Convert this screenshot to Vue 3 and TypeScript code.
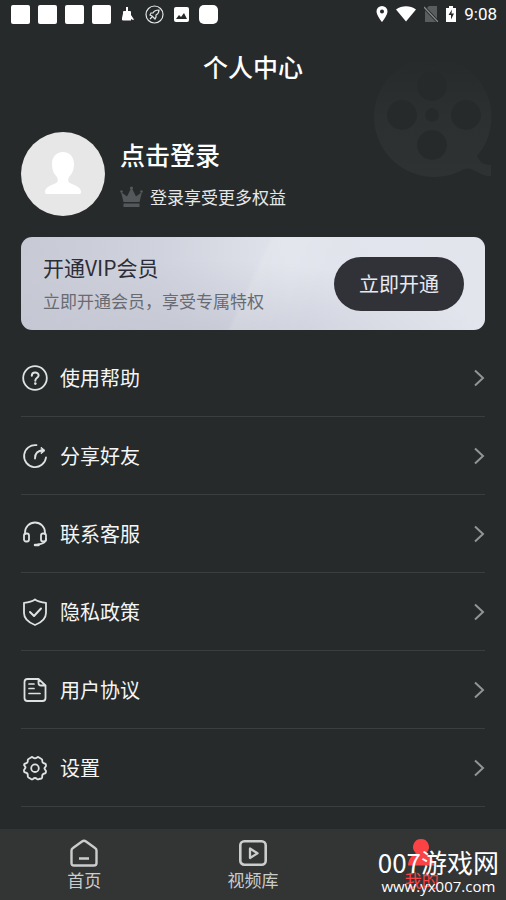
<script setup lang="ts">
import { ref } from 'vue'

type MenuIcon = 'help' | 'share' | 'service' | 'privacy' | 'agreement' | 'settings'

interface MenuItem {
  icon: MenuIcon
  label: string
}

const menu: MenuItem[] = [
  { icon: 'help', label: '使用帮助' },
  { icon: 'share', label: '分享好友' },
  { icon: 'service', label: '联系客服' },
  { icon: 'privacy', label: '隐私政策' },
  { icon: 'agreement', label: '用户协议' },
  { icon: 'settings', label: '设置' },
]

const tabs = [
  { id: 'home', label: '首页' },
  { id: 'library', label: '视频库' },
  { id: 'mine', label: '我的' },
]

const activeTab = ref('mine')
</script>

<template>
  <div class="page">
    <div class="status">
      <div class="status-group notices">
        <i class="block"></i>
        <i class="block"></i>
        <i class="block"></i>
        <i class="block"></i>
        <svg class="broom" width="14" height="14" viewBox="0 0 14 14" aria-hidden="true">
          <path d="M5 0h2v4h2q1 0 1 1v3l3 4.500-1 .5-2-1v1.500H2Q.5 13.500 1 11l1-4.500V5q0-1 1-1h2z" fill="#fff" />
        </svg>
        <svg class="rocket" width="19" height="19" viewBox="0 0 19 19" fill="none" stroke="#e4e6e6" aria-hidden="true">
          <circle cx="9.500" cy="9.500" r="8.500" stroke-width="1.200" />
          <path d="M14 5c-3 0-5 1-6 3H6l-1 2 2 1 2 2 1 1 1-2v-2c2-1 3-3 3-5zM5 14l2-2" stroke-width="1.200" />
        </svg>
        <svg class="photo" width="15" height="15" viewBox="0 0 15 15" aria-hidden="true">
          <rect width="15" height="15" rx="2" fill="#fff" />
          <path d="M2 12l3-4 2 2 3-4 3 6z" fill="#262a2b" />
        </svg>
        <i class="block round"></i>
      </div>
      <div class="status-group system">
        <svg width="12" height="16" viewBox="0 0 12 16" aria-hidden="true">
          <path d="M6 0a5.500 5.500 0 0 0-5.500 5.500C.5 9.500 6 16 6 16s5.500-6.500 5.500-10.500A5.500 5.500 0 0 0 6 0zm0 3.500a2 2 0 1 1 0 4 2 2 0 0 1 0-4z" fill="#fff" />
        </svg>
        <svg width="20" height="16" viewBox="0 0 20 16" aria-hidden="true">
          <path d="M0 3.500C6-.8 14-.8 20 3.500L10 15.500z" fill="#fff" />
        </svg>
        <svg class="sim" width="14" height="16" viewBox="0 0 14 16" aria-hidden="true">
          <path d="M5 0h8v16H1V4z" fill="#5a5d5e" />
          <path d="M0 1l14 15" stroke="#262a2b" stroke-width="3" />
          <path d="M0 1l14 15" stroke="#8b8d8d" stroke-width="1.200" />
        </svg>
        <svg width="10" height="16" viewBox="0 0 10 16" aria-hidden="true">
          <path d="M3 0h4v2h3v14H0V2h3z" fill="#fff" />
          <path d="M6 3.500L2.500 9H5v4.500L8 7.500H5.500z" fill="#262a2b" />
        </svg>
        <time>9:08</time>
      </div>
    </div>

    <header class="title-bar">
      <h1>个人中心</h1>
      <svg class="reel" width="122" height="122" viewBox="0 0 122 122" aria-hidden="true">
        <defs>
          <linearGradient id="reel-fade" x1="0" y1="0" x2="0" y2="1">
            <stop offset="0" stop-color="#2e3132" stop-opacity="0" />
            <stop offset="0.500" stop-color="#2e3132" stop-opacity="0.850" />
            <stop offset="1" stop-color="#2f3233" />
          </linearGradient>
        </defs>
        <path
          fill="url(#reel-fade)"
          fill-rule="evenodd"
          d="M60 0a60 60 0 1 0 32 112c10-3 16 8 27 7V108c-7 0-11-2-14-9A60 60 0 0 0 60 0zM60 14a15 15 0 1 1 0 30 15 15 0 0 1 0-30zM30 43a15 15 0 1 1 0 30 15 15 0 0 1 0-30zM94 43a15 15 0 1 1 0 30 15 15 0 0 1 0-30zM60 73a15 15 0 1 1 0 30 15 15 0 0 1 0-30zM60 51a7 7 0 1 1 0 14 7 7 0 0 1 0-14z"
        />
      </svg>
    </header>

    <main class="content">
      <button type="button" class="profile">
        <svg class="avatar" width="84" height="84" viewBox="0 0 84 84" aria-hidden="true">
          <circle cx="42" cy="42" r="42" fill="#e7e7e7" />
          <path d="M42 20c-7 0-11 5-11 12 0 6 2 10 5 13 2 4 0 6-3 7-5 2-9 4-9 8 0 2 1 2 3 2h30c2 0 3 0 3-2 0-4-4-6-9-8-3-1-5-3-3-7 3-3 5-7 5-13 0-7-4-12-11-12z" fill="#fff" />
        </svg>
        <span class="profile-text">
          <strong>点击登录</strong>
          <span class="benefit">
            <svg width="24" height="22" viewBox="0 0 24 22" fill="#55585a" aria-hidden="true">
              <path d="M3.500 16L1 6l6 4.500L11 2.500h1L16 10.500 22 6l-2.500 10zM3.500 17.500h16V21h-16z" />
              <circle cx="1.500" cy="5.500" r="1.300" />
              <circle cx="11.500" cy="2" r="1.600" />
              <circle cx="21.500" cy="5.500" r="1.300" />
            </svg>
            <span>登录享受更多权益</span>
          </span>
        </span>
      </button>

      <section class="vip">
        <div class="vip-text">
          <h2>开通VIP会员</h2>
          <p>立即开通会员，享受专属特权</p>
        </div>
        <button type="button" class="vip-button">立即开通</button>
      </section>

      <ul class="menu">
        <li v-for="item in menu" :key="item.icon">
          <button type="button" class="menu-row">
            <svg class="menu-icon" width="28" height="28" viewBox="0 0 28 28" aria-hidden="true">
              <g v-if="item.icon === 'help'">
                <circle cx="14" cy="14" r="11.800" />
                <path d="M10.800 11.800c0-4.400 6.800-4.200 6.800-.3 0 2.300-3.300 2.400-3.300 5.200" stroke-width="2" />
                <circle cx="14.300" cy="19.600" r="1.300" fill="#dfe2e2" stroke="none" />
              </g>
              <g v-else-if="item.icon === 'share'">
                <path d="M15.500 3.200A11 11 0 1 0 25 15.500" />
                <path d="M14 16.500c0-5 2.500-8 8-8" />
                <path d="M20.500 5.500L24 8.500l-3.500 3z" fill="#dfe2e2" stroke-width="1" />
              </g>
              <g v-else-if="item.icon === 'service'">
                <path d="M4 14v-1.500a10 10 0 0 1 20 0V14M25 19c0 4-4 5-8 5.500" />
                <rect x="3" y="13.500" width="5" height="8" rx="2" />
                <rect x="20" y="13.500" width="5" height="8" rx="2" />
                <path d="M14 25h3.500" stroke-width="2.500" />
              </g>
              <g v-else-if="item.icon === 'privacy'">
                <path d="M14 1.500c3 2.300 6.500 3 11 3.300V15c0 6-4.500 9.500-11 12C7.500 24.500 3 21 3 15V4.800c4.500-.3 8-1 11-3.300z" />
                <path d="M9 14l4 4 7-7.500" stroke-width="2" />
              </g>
              <g v-else-if="item.icon === 'agreement'">
                <path d="M17.500 3H6.500Q3.500 3 3.500 6v16q0 3 3 3h15q3 0 3-3V9.500zM17.500 3v4q0 2.500 2.500 2.500h4.500" />
                <path d="M8 8h5M8 12.500h5M8 17.500h11" stroke-width="1.700" />
              </g>
              <g v-else>
                <path d="M10 3.500q1-1 2 0 2 1.500 4 0 1-1 2 0l2.500 1.500q1 .5.700 2 0 2 2.300 2.500 1.500.3 1.500 1.500v1l-1 1.500q-1 1 0 2l1 1.500v1q-.3 1.500-1.500 1.500-2.500.5-2.300 3 .2 1.300-.7 2L18 25q-1 .7-2 0-2-2-4 0-1 .7-2 0l-2.500-1.500q-1-.7-.7-2 .2-2.500-2.300-3Q3 18.500 3 17v-1l1-1.500q1-1 0-2L3 11q0-1.200 1.500-1.500Q7 9 6.800 7q-.3-1.500.7-2z" />
                <circle cx="14" cy="14.200" r="3.800" />
              </g>
            </svg>
            <span class="menu-label">{{ item.label }}</span>
            <svg class="chevron" width="12" height="18" viewBox="0 0 12 18" aria-hidden="true">
              <path d="M2 1.500L10 9l-8 7.500" fill="none" stroke="#929595" stroke-width="2" />
            </svg>
          </button>
        </li>
      </ul>
    </main>

    <footer class="dock">
      <nav class="tabs">
        <button
          v-for="tab in tabs"
          :key="tab.id"
          type="button"
          class="tab"
          :class="{ active: activeTab === tab.id }"
          @click="activeTab = tab.id"
        >
          <svg width="30" height="30" viewBox="0 0 30 30" fill="none" stroke="currentColor" aria-hidden="true">
            <path v-if="tab.id === 'home'" d="M13 3.500q2-1.500 4 0l9 6.500q1.500 1 1.500 2.500V25q0 2.500-2.500 2.500H5Q2.500 27.500 2.500 25V12.500Q2.500 11 4 10zM10 20.500h10" stroke-width="2.400" />
            <g v-else-if="tab.id === 'library'" stroke-width="2.600" stroke-linejoin="round">
              <rect x="2.300" y="3.300" width="25.400" height="23.400" rx="4" />
              <path d="M12 10.500v9.500l7.500-4.700z" stroke-width="2.300" />
            </g>
            <path v-else d="M14 1a8 8 0 0 0-5 14.200c-5 2.300-7.500 6-8 12.300h26c-.5-6.300-3-10-8-12.300A8 8 0 0 0 14 1z" fill="currentColor" stroke="none" />
          </svg>
          <span>{{ tab.label }}</span>
        </button>
      </nav>
      <div class="brand">
        <span class="brand-name">007游戏网</span>
        <span class="brand-url">www.yx007.com</span>
      </div>
    </footer>
  </div>
</template>

<style>
body {
  background: #262a2b;
}
</style>

<style scoped>
.page {
  display: flex;
  flex-direction: column;
  min-height: 100vh;
  background: #262a2b;
  color: #fff;
  font-family: "Noto Sans CJK SC", sans-serif;
}

button {
  border: 0;
  padding: 0;
  background: none;
  color: inherit;
  font: inherit;
  cursor: pointer;
}

h1,
h2,
p,
ul {
  margin: 0;
  padding: 0;
}

.status {
  display: flex;
  justify-content: space-between;
  align-items: center;
  height: 28px;
  padding: 0 9px 0 11px;
}

.status-group {
  display: flex;
  align-items: center;
}

.notices {
  gap: 8px;
}

.block {
  width: 19px;
  height: 19px;
  border-radius: 2px;
  background: #fff;
}

.round {
  border-radius: 5px;
}

.broom,
.photo {
  margin: 0 2px;
}

.system {
  gap: 8px;
}

.system time {
  font: 400 17px/20px Roboto, sans-serif;
}

.title-bar {
  position: relative;
  display: flex;
  justify-content: center;
  align-items: center;
  height: 76px;
}

.title-bar h1 {
  font-size: 25px;
  line-height: 36px;
  font-weight: 500;
}

.reel {
  position: absolute;
  top: 29px;
  right: 12px;
}

.content {
  flex: 1;
  padding: 28px 21px 21px;
}

.profile {
  display: flex;
  align-items: center;
  gap: 15px;
  width: 100%;
  text-align: left;
}

.profile-text {
  display: flex;
  flex-direction: column;
  gap: 12px;
  padding-bottom: 2px;
}

.profile strong {
  font-size: 25px;
  line-height: 36px;
  font-weight: 500;
}

.benefit {
  display: flex;
  align-items: center;
  gap: 6px;
  font-size: 17px;
  line-height: 26px;
  color: #e6e8e8;
}

.vip {
  display: flex;
  justify-content: space-between;
  align-items: center;
  min-height: 93px;
  margin-top: 21px;
  padding: 0 21px 0 22px;
  border-radius: 11px;
  background:
    linear-gradient(115deg, transparent 50%, rgba(255, 255, 255, 0.1) 50%, transparent 66%),
    linear-gradient(168deg, #d4d7e0 0%, #c4c7d3 38%, #c9ccd7 44%, #e2e5ed 66%, #dfe1ea 100%);
  background:
    linear-gradient(115deg, transparent 49%, rgba(255, 255, 255, 0.12) 50%, transparent 64%),
    radial-gradient(ellipse 60% 90% at 40% 115%, rgba(190, 193, 206, 0.7), transparent),
    linear-gradient(90deg, #c7cad5 0%, #d0d3dd 30%, #e1e4ec 58%, #e3e5ed 100%);
  box-sizing: border-box;
}

.vip h2 {
  font-size: 21px;
  line-height: 34px;
  font-weight: 400;
  color: #2c2d36;
}

.vip p {
  font-size: 17px;
  line-height: 34px;
  color: #696b73;
}

.vip-button {
  width: 130px;
  height: 54px;
  border-radius: 27px;
  background: #313238;
  color: #e7e9f2;
  font-size: 20px;
}

.menu {
  margin-top: 9px;
  list-style: none;
}

.menu li {
  border-bottom: 1px solid #3b3e3f;
}

.menu-row {
  display: flex;
  align-items: center;
  width: 100%;
  height: 77px;
  text-align: left;
}

.menu-icon {
  fill: none;
  stroke: #dfe2e2;
  stroke-width: 1.8;
  stroke-linecap: round;
  stroke-linejoin: round;
}

.menu-label {
  flex: 1;
  margin-left: 11px;
  font-size: 20px;
  line-height: 28px;
  color: #f4f6f6;
}

.dock {
  position: relative;
  background: #333535;
}

.tabs {
  display: grid;
  grid-template-columns: repeat(3, 1fr);
  height: 71px;
}

.tab {
  display: flex;
  flex-direction: column;
  align-items: center;
  justify-content: center;
  color: #cbcccc;
  font-size: 17px;
  line-height: 24px;
}

.active {
  color: #fb4245;
}

.brand {
  position: absolute;
  right: 7px;
  bottom: 4px;
  display: flex;
  flex-direction: column;
  align-items: center;
  color: #fff;
  pointer-events: none;
}

.brand-name {
  font-size: 26px;
  line-height: 28px;
}

.brand-url {
  font: 15px/20px "Open Sans", sans-serif;
}
</style>
